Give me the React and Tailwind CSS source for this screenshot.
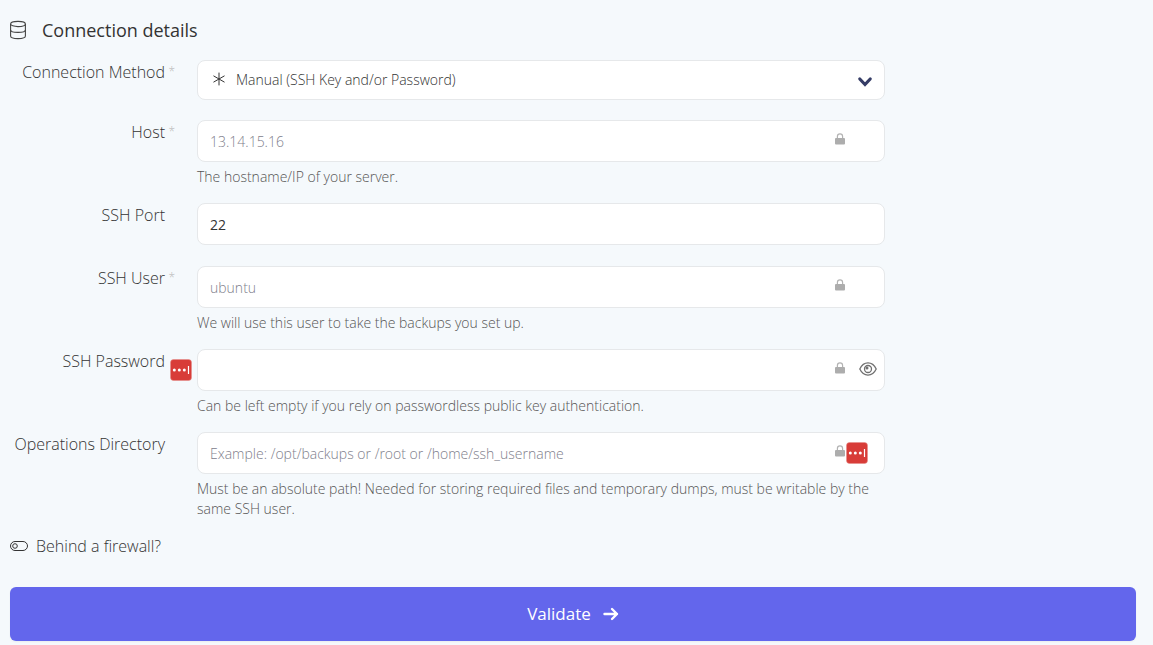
import React, { useState } from 'react';

const inputClass =
  'block h-[42px] w-full rounded-lg border border-[#e6e8ea] bg-white px-3 text-sm text-[#333] placeholder:font-light placeholder:text-[#80808c] focus:outline-none focus-visible:border-[#6366ec]';

function DatabaseIcon() {
  return (
    <svg className="h-5 w-4 shrink-0" viewBox="0 0 16 20" fill="none" stroke="#444" strokeWidth="1.1" aria-hidden="true">
      <ellipse cx="8" cy="4" rx="7.4" ry="2.6" />
      <path d="M.6 4v12c0 1.500 3.300 2.600 7.400 2.600s7.400-1.100 7.400-2.600V4" />
      <path d="M.6 10c0 1.400 3.300 2.400 7.400 2.400s7.400-1 7.400-2.400" />
    </svg>
  );
}

function LockIcon() {
  return (
    <svg className="pointer-events-none absolute top-[13px] right-10 h-3 w-2.5" viewBox="0 0 10 12" aria-hidden="true">
      <path d="M2.400 6V3.400a2.600 2.600 0 0 1 5.200 0V6" fill="none" stroke="#b3b3b3" strokeWidth="1.200" />
      <rect y="5" width="10" height="6.600" rx="1" fill="#adadad" />
    </svg>
  );
}

function EyeIcon() {
  return (
    <svg className="h-4 w-[18px]" viewBox="0 0 18 16" fill="none" stroke="#707070" strokeWidth="1.300" aria-hidden="true">
      <path d="M.8 8C2.700 4 5.600 1.900 9 1.900S15.300 4 17.200 8C15.300 12 12.400 14.100 9 14.100S2.700 12 .8 8Z" />
      <circle cx="9" cy="8" r="3.500" />
      <circle cx="8" cy="7" r="1.500" fill="#707070" stroke="none" />
    </svg>
  );
}

function VaultIcon() {
  return (
    <svg className="h-[22px] w-[22px]" viewBox="0 0 22 22" aria-hidden="true">
      <rect x=".5" y=".5" width="21" height="21" rx="3" fill="#d83c38" stroke="#e58a87" strokeWidth=".5" />
      <circle cx="4.300" cy="11" r="1.500" fill="#fff" />
      <circle cx="9.300" cy="11" r="1.500" fill="#fff" />
      <circle cx="14.300" cy="11" r="1.500" fill="#fff" />
      <path d="M18.500 7v8" stroke="#fff" strokeWidth="1.200" />
    </svg>
  );
}

function FormRow({ id, label, required, help, children, className = '' }) {
  return (
    <div className={`grid grid-cols-[155px_minmax(0,688px)] gap-x-8 ${className}`}>
      <label htmlFor={id} className="relative text-right text-base font-light text-[#333]">
        {label}
        {required && <span className="absolute top-0 -right-2.5 text-xs leading-6 text-[#bbb]">*</span>}
      </label>
      <div>
        <div className="relative">{children}</div>
        {help && <p className="mt-[5px] text-sm font-light text-[#555]">{help}</p>}
      </div>
    </div>
  );
}

function App() {
  const [form, setForm] = useState({
    method: 'manual',
    host: '',
    port: '22',
    user: '',
    password: '',
    directory: '',
  });
  const [showPassword, setShowPassword] = useState(false);
  const [firewall, setFirewall] = useState(false);

  const handleChange = (e) => {
    const { name, value } = e.target;
    setForm((prev) => ({ ...prev, [name]: value }));
  };

  return (
    <form
      onSubmit={(e) => e.preventDefault()}
      className="min-h-screen bg-[#f5f9fc] pt-[18px] pr-[17px] pb-1 pl-2.5 font-['Open_Sans',sans-serif]"
    >
      <h2 className="mb-[18px] flex h-6 items-center gap-4 text-lg font-medium text-[#333]">
        <DatabaseIcon />
        Connection details
      </h2>

      <FormRow id="method" label="Connection Method" required className="mb-5">
        <select
          id="method"
          name="method"
          value={form.method}
          onChange={handleChange}
          className="block h-10 w-full appearance-none rounded-lg border border-[#e6e8ea] bg-white pr-10 pl-[38px] text-sm font-light text-[#333] focus:outline-none"
        >
          <option value="manual">Manual (SSH Key and/or Password)</option>
        </select>
        <svg className="pointer-events-none absolute top-3 left-4 h-3.5 w-3" viewBox="0 0 12 14" stroke="#333" strokeWidth="1" strokeLinecap="round" aria-hidden="true">
          <path d="M6 1v12M.8 4l10.400 6M11.200 4L.8 10" />
        </svg>
        <svg className="pointer-events-none absolute top-4 right-3 h-3 w-4" viewBox="0 0 16 12" fill="none" stroke="#353c66" strokeWidth="3.200" strokeLinecap="round" aria-hidden="true">
          <path d="M2.800 3L8 8.500 13.200 3" />
        </svg>
      </FormRow>

      <FormRow id="host" label="Host" required help="The hostname/IP of your server." className="mb-4">
        <input id="host" name="host" type="text" placeholder="13.14.15.16" value={form.host} onChange={handleChange} className={inputClass} />
        <LockIcon />
      </FormRow>

      <FormRow id="port" label="SSH Port" className="mb-[21px]">
        <input id="port" name="port" type="text" value={form.port} onChange={handleChange} className={inputClass} />
      </FormRow>

      <FormRow id="user" label="SSH User" required help="We will use this user to take the backups you set up." className="mb-4">
        <input id="user" name="user" type="text" placeholder="ubuntu" value={form.user} onChange={handleChange} className={inputClass} />
        <LockIcon />
      </FormRow>

      <FormRow
        id="password"
        label="SSH Password"
        help="Can be left empty if you rely on passwordless public key authentication."
        className="mb-4"
      >
        <input
          id="password"
          name="password"
          type={showPassword ? 'text' : 'password'}
          value={form.password}
          onChange={handleChange}
          className={inputClass}
        />
        <span className="absolute top-2.5 -left-[27px]">
          <VaultIcon />
        </span>
        <LockIcon />
        <button
          type="button"
          aria-label="Show password"
          onClick={() => setShowPassword(!showPassword)}
          className="absolute top-3 right-2"
        >
          <EyeIcon />
        </button>
      </FormRow>

      <FormRow
        id="directory"
        label="Operations Directory"
        help="Must be an absolute path! Needed for storing required files and temporary dumps, must be writable by the same SSH user."
        className="mb-[15px]"
      >
        <input
          id="directory"
          name="directory"
          type="text"
          placeholder="Example: /opt/backups or /root or /home/ssh_username"
          value={form.directory}
          onChange={handleChange}
          className={inputClass}
        />
        <LockIcon />
        <span className="absolute top-2.5 right-[17px]">
          <VaultIcon />
        </span>
      </FormRow>

      <label className="flex w-fit cursor-pointer items-center gap-2 text-base font-light text-[#333]">
        <input type="checkbox" checked={firewall} onChange={(e) => setFirewall(e.target.checked)} className="sr-only" />
        <svg className="h-3 w-[18px]" viewBox="0 0 18 12" fill="none" stroke="#333" strokeWidth="1" aria-hidden="true">
          <rect x=".5" y="1.500" width="17" height="9" rx="4.500" />
          <circle cx={firewall ? 13 : 5} cy="6" r="2.300" />
        </svg>
        Behind a firewall?
      </label>

      <button
        type="submit"
        className="mt-[29px] flex h-[54px] w-full items-center justify-center gap-3 rounded-md bg-[#6366ec] text-[17px] text-white shadow-xs hover:bg-[#5558e0]"
      >
        Validate
        <svg className="h-3.5 w-4" viewBox="0 0 16 14" fill="none" stroke="#fff" strokeWidth="2.400" strokeLinecap="round" strokeLinejoin="round" aria-hidden="true">
          <path d="M1.500 7h12.500M9 2l5 5-5 5" />
        </svg>
      </button>
    </form>
  );
}

export default App;
